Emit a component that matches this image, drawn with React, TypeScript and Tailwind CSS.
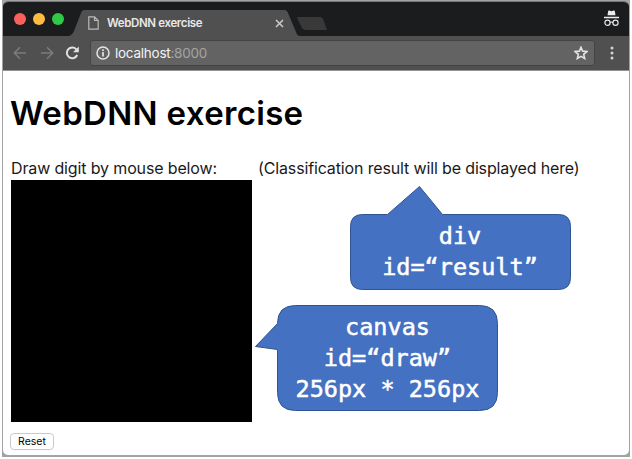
function TrafficLights() {
  return (
    <div className="flex gap-[7px] pl-[11px] pt-[11px]">
      <span className="h-[12px] w-[12px] rounded-full bg-[#fc605c]" />
      <span className="h-[12px] w-[12px] rounded-full bg-[#fdbc40]" />
      <span className="h-[12px] w-[12px] rounded-full bg-[#30c946]" />
    </div>
  );
}

function TabStrip() {
  return (
    <div className="relative flex h-[34px] bg-[#1b1c1d]">
      <svg className="absolute left-0 top-0" width="350" height="34" viewBox="0 0 350 34">
        <path d="M66 34 C69 33 70 31 71 29 L78 11 Q79 8 81 8 H282 Q284 8 285 11 L293 30 Q294 34 297 34 Z" fill="#505050" />
        <path d="M136 15 H158 Q160 15 161 17 L165 28 H144 Q141 28 140 26 L135.500 17 Q134.500 15 136 15 Z" transform="translate(159 0)" fill="#393939" />
      </svg>
      <TrafficLights />
      <div className="relative ml-[24px] flex h-[34px] w-[196px] pt-[9px]">
        <svg className="mt-[5px] shrink-0" width="11" height="14" viewBox="0 0 11 14" fill="none" stroke="#b9b9b9" strokeWidth="1.2">
          <path d="M.8 .8 H6.500 L10.200 4.500 V13.200 H.8 Z M6.500 .8 V4.500 H10.200" />
        </svg>
        <span className="ml-[8px] mt-[4px] whitespace-nowrap text-[11.5px] leading-[17px] font-semibold tracking-[-0.36px] text-[#e9e9e9]">WebDNN exercise</span>
        <svg className="ml-auto mt-[8px] shrink-0" width="9" height="9" viewBox="0 0 9 9" stroke="#c9c9c9" strokeWidth="1.6">
          <path d="M1 1 L8 8 M8 1 L1 8" />
        </svg>
      </div>
      <svg className="ml-auto mr-[9px] mt-[8px]" width="17" height="17" viewBox="0 0 17 17" fill="none">
        <path d="M4.500 5.200 L5.200 1 Q5.400 .2 6.200 .5 L8.500 1.200 L10.800 .5 Q11.600 .2 11.800 1 L12.500 5.200 Z M1 6.700 H16 V8.200 H1 Z" fill="#ededed" />
        <circle cx="4.500" cy="12.800" r="2.600" stroke="#e5e5e5" strokeWidth="1.2" />
        <circle cx="12.500" cy="12.800" r="2.600" stroke="#e5e5e5" strokeWidth="1.2" />
        <path d="M7 12.500 Q8.500 11.500 10 12.500" stroke="#e5e5e5" strokeWidth="1.200" />
      </svg>
    </div>
  );
}

function Toolbar() {
  return (
    <div className="flex h-[35px] items-center border-b border-[#929292] bg-[#505050]">
      <svg className="ml-[10px] shrink-0" width="14" height="14" viewBox="0 0 14 14" fill="none" stroke="#7b7b7b" strokeWidth="1.6">
        <path d="M13 7 H1.500 M7 1.300 L1.300 7 L7 12.700" />
      </svg>
      <svg className="ml-[13px] shrink-0" width="14" height="14" viewBox="0 0 14 14" fill="none" stroke="#7b7b7b" strokeWidth="1.6">
        <path d="M1 7 H12.500 M7 1.300 L12.700 7 L7 12.700" />
      </svg>
      <svg className="ml-[11px] shrink-0" width="15" height="14" viewBox="0 0 15 14" fill="none">
        <path d="M12.200 9 A5.400 5.400 0 1 1 11.300 3.300" stroke="#e0e0e0" strokeWidth="2" />
        <path d="M13.800 .5 V6.200 H8 Z" fill="#e0e0e0" />
      </svg>
      <div className="ml-[10px] flex h-[26px] w-[505px] shrink-0 items-center rounded-[3px] border border-[#444] bg-[#636363] pl-[5px] pr-[6px]">
        <svg width="14" height="14" viewBox="0 0 14 14" fill="none">
          <circle cx="7" cy="7" r="6" stroke="#e5e5e5" strokeWidth="1.5" />
          <path d="M7 6 V10.500 M7 3.300 V4.900" stroke="#e5e5e5" strokeWidth="1.700" />
        </svg>
        <span className="ml-[5px] text-[13.5px] leading-[20px] tracking-[-0.25px] text-[#f3f3f3]">localhost<span className="text-[#a4a4a4]">:8000</span></span>
        <svg className="ml-auto" width="14" height="14" viewBox="0 0 13 13" fill="none" stroke="#e2e2e2" strokeWidth="1.500">
          <path d="M6.500 1.200 L8 4.800 L12 5.100 L9 7.700 L9.900 11.600 L6.500 9.600 L3.100 11.600 L4 7.700 L1 5.100 L5 4.800 Z" />
        </svg>
      </div>
      <svg className="ml-[15px] shrink-0" width="4" height="14" viewBox="0 0 4 14" fill="#d5d5d5">
        <circle cx="2" cy="2" r="1.500" /><circle cx="2" cy="7" r="1.500" /><circle cx="2" cy="12" r="1.500" />
      </svg>
    </div>
  );
}

const calloutText = "text-center font-['DejaVu_Sans_Mono',monospace] text-[23.5px] leading-[31px] whitespace-pre text-white [-webkit-text-stroke:0.5px_white]";

function ResultCallout() {
  return (
    <div className="absolute left-[349px] top-[184px] h-[108px] w-[224px]">
      <svg className="absolute inset-0" width="224" height="108" viewBox="0 0 224 108">
        <path d="M13.500 30.500 H38.500 L70.500 2.500 L93.500 30.500 H209.500 Q221.500 30.500 221.500 42.500 V93.500 Q221.500 105.500 209.500 105.500 H13.500 Q1.500 105.500 1.500 93.500 V42.500 Q1.500 30.500 13.500 30.500 Z" fill="#4571c2" stroke="#305491" />
      </svg>
      <div className={`relative mr-[2px] pt-[37px] ${calloutText}`}>{"div\nid=“result”"}</div>
    </div>
  );
}

function CanvasCallout() {
  return (
    <div className="absolute left-[254px] top-[304px] h-[108px] w-[246px]">
      <svg className="absolute inset-0" width="246" height="108" viewBox="0 0 246 108">
        <path d="M41.500 1.500 H225.500 Q243.500 1.500 243.500 19.500 V88.500 Q243.500 106.500 225.500 106.500 H41.500 Q23.500 106.500 23.500 88.500 V45.500 L1.500 42.500 L23.500 19.500 Q23.500 1.500 41.500 1.500 Z" fill="#4571c2" stroke="#305491" />
      </svg>
      <div className={`relative ml-[23px] mr-[2px] pt-[8px] ${calloutText}`}>{"canvas\nid=“draw”\n256px * 256px"}</div>
    </div>
  );
}

export default function App() {
  return (
    <div className="relative h-[459px] w-[632px] overflow-hidden bg-white pl-[2px] font-['Inter',sans-serif]">
      <div className="h-[457px] w-[628px] bg-[#a3a3a3] px-px pt-px">
        <div className="flex h-[454px] w-[626px] flex-col overflow-hidden rounded-[5px] border-t border-[#777] bg-white">
          <TabStrip />
          <Toolbar />
          <main className="flex flex-col items-start pl-[8px] text-black">
            <h1 className="-ml-px mt-[22px] whitespace-nowrap text-[33px] leading-[40px] font-semibold tracking-[0.32px]">WebDNN exercise</h1>
            <div className="mt-[24px] flex h-[23px] whitespace-nowrap text-[16px] leading-[22px] tracking-[-0.14px] text-[#1a1a1a]">
              <span className="w-[247px]">Draw digit by mouse below:</span>
              <span>(Classification result will be displayed here)</span>
            </div>
            <div className="h-[242px] w-[241px] bg-black" />
            <button className="-ml-px mt-[11px] h-[17px] w-[44px] rounded-[4px] border border-[#c9c9c9] bg-white text-[10.5px] leading-[15px]">Reset</button>
          </main>
        </div>
      </div>
      <ResultCallout />
      <CanvasCallout />
    </div>
  );
}
